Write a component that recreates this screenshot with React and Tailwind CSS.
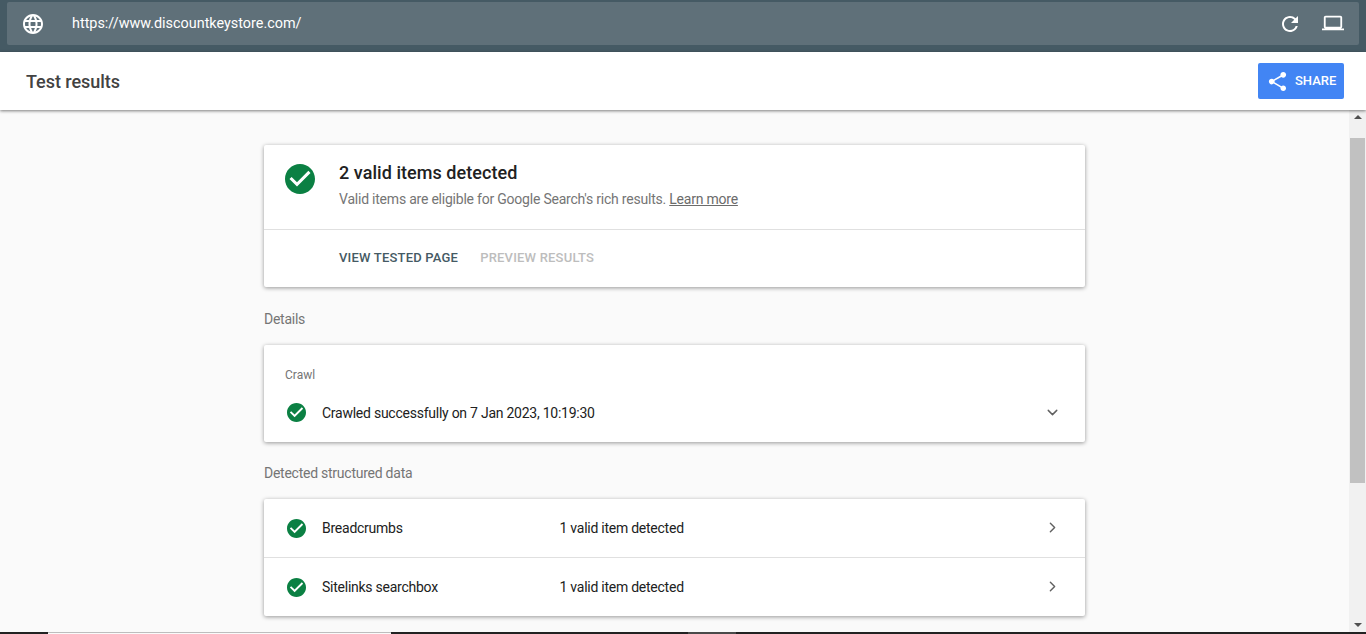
import { ChevronDown, ChevronRight } from "lucide-react";

const font = "font-['Roboto',sans-serif]";

function CheckCircle({ className }) {
  return (
    <svg viewBox="2 2 20 20" className={className}>
      <path
        fill="#0b8043"
        d="M12 2C6.48 2 2 6.48 2 12s4.48 10 10 10 10-4.48 10-10S17.52 2 12 2zm-2 15l-5-5 1.41-1.41L10 14.17l7.59-7.59L19 8l-9 9z"
      />
    </svg>
  );
}

function Row({ name, value, border }) {
  return (
    <div className={`flex items-center pl-[23px] pr-[24px] ${border ? "border-t border-[#e0e0e0] h-[59px]" : "h-[58px]"}`}>
      <CheckCircle className="w-[19px] h-[19px]" />
      <div className="w-[237.5px] ml-[16px] text-[14px] tracking-[-0.25px] text-[#212121]">{name}</div>
      <div className="flex-1 text-[14px] tracking-[-0.25px] text-[#212121]">{value}</div>
      <ChevronRight className="w-[17px] h-[17px] text-[#616161] -mt-[2px]" strokeWidth={2} />
    </div>
  );
}

export default function App() {
  return (
    <div className={`${font} w-[1366px] h-[634px] overflow-hidden flex flex-col bg-[#fafafa] relative`}>
      <div className="h-[52px] bg-[#455a64] px-[7px] pt-[2px] pb-[7px] shrink-0">
        <div className="h-[43px] bg-[#5f7079] rounded-[2px] flex items-center pl-[16px] pr-[15px] text-white">
          <svg viewBox="2 2 20 20" className="w-[20px] h-[20px]" fill="#fff">
            <path d="M11.99 2C6.47 2 2 6.48 2 12s4.47 10 9.99 10C17.52 22 22 17.52 22 12S17.52 2 11.99 2zm6.93 6h-2.95a15.65 15.65 0 0 0-1.38-3.56A8.03 8.03 0 0 1 18.92 8zM12 4.04c.83 1.2 1.48 2.53 1.91 3.96h-3.82c.43-1.43 1.08-2.76 1.91-3.96zM4.26 14C4.1 13.36 4 12.69 4 12s.1-1.36.26-2h3.38c-.08.66-.14 1.32-.14 2s.06 1.34.14 2H4.26zm.82 2h2.95c.32 1.25.78 2.45 1.38 3.56A7.987 7.987 0 0 1 5.08 16zm2.95-8H5.08a7.987 7.987 0 0 1 4.33-3.56A15.65 15.65 0 0 0 8.03 8zM12 19.96c-.83-1.2-1.48-2.53-1.91-3.96h3.82c-.43 1.43-1.08 2.76-1.91 3.96zM14.34 14H9.66c-.09-.66-.16-1.32-.16-2s.07-1.35.16-2h4.68c.09.65.16 1.32.16 2s-.07 1.34-.16 2zm.25 5.56c.6-1.11 1.06-2.31 1.38-3.56h2.95a8.03 8.03 0 0 1-4.33 3.56zM16.36 14c.08-.66.14-1.32.14-2s-.06-1.34-.14-2h3.38c.16.64.26 1.31.26 2s-.1 1.36-.26 2h-3.38z" />
          </svg>
          <div className="ml-[29px] flex-1 text-[14.4px]">https://www.discountkeystore.com/</div>
          <svg viewBox="0 0 24 24" className="w-[24px] h-[24px]" fill="#fff">
            <path d="M17.65 6.35A7.958 7.958 0 0 0 12 4c-4.42 0-7.99 3.58-7.99 8s3.57 8 7.99 8c3.73 0 6.84-2.55 7.73-6h-2.08A5.99 5.99 0 0 1 12 18c-3.31 0-6-2.69-6-6s2.69-6 6-6c1.66 0 3.14.69 4.22 1.78L13 11h7V4l-2.35 2.35z" />
          </svg>
          <svg viewBox="0 0 24 24" className="w-[22px] h-[22px] ml-[20px] -mt-[2px]" fill="#fff">
            <path d="M20 18c1.1 0 1.99-.9 1.99-2L22 6c0-1.1-.9-2-2-2H4c-1.1 0-2 .9-2 2v10c0 1.1.9 2 2 2H0v2h24v-2h-4zM4 6h16v10H4V6z" />
          </svg>
        </div>
      </div>

      <div className="h-[58px] bg-white flex items-center justify-between pl-[26px] pr-[22px] shrink-0 z-10 shadow-[0_1px_3px_rgba(0,0,0,0.5)]">
        <div className="text-[18px] font-medium text-[#424242] tracking-[-0.05px]">Test results</div>
        <button className="w-[86px] h-[36px] bg-[#4285f4] rounded-[2px] flex items-center pl-[8px] text-white text-[13px] font-medium">
          <svg viewBox="0 0 24 24" className="w-[23px] h-[23px] mr-[6px]" fill="#fff">
            <path d="M18 16.08c-.76 0-1.44.3-1.96.77L8.91 12.7c.05-.23.09-.46.09-.7s-.04-.47-.09-.7l7.05-4.11c.54.5 1.25.81 2.04.81 1.66 0 3-1.34 3-3s-1.34-3-3-3-3 1.34-3 3c0 .24.04.47.09.7L8.04 9.81C7.5 9.31 6.79 9 6 9c-1.66 0-3 1.34-3 3s1.34 3 3 3c.79 0 1.5-.31 2.04-.81l7.12 4.16c-.05.21-.08.43-.08.65 0 1.61 1.31 2.92 2.92 2.92s2.92-1.31 2.92-2.92-1.31-2.92-2.92-2.92z" />
          </svg>
          SHARE
        </button>
      </div>

      <div className="flex-1 flex min-h-0">
        <div className="flex-1 pl-[264px] pt-[35px]">
          <div className="w-[821px] bg-white rounded-[2px] shadow-[0_1px_4px_rgba(0,0,0,0.4)]">
            <div className="h-[85px] flex border-b border-[#e0e0e0] pl-[21px]">
              <CheckCircle className="w-[30px] h-[30px] mt-[19px]" />
              <div className="ml-[24px] pt-[15px]">
                <div className="text-[18px] leading-[26px] font-medium tracking-[0.05px] text-[#212121]">2 valid items detected</div>
                <div className="text-[14px] leading-[20px] tracking-[-0.22px] mt-[3px] text-[#757575]">
                  Valid items are eligible for Google Search's rich results.{" "}
                  <span className="underline text-[#6b6b6b]">Learn more</span>
                </div>
              </div>
            </div>
            <div className="h-[57px] flex items-center pl-[75px] pb-[2px] text-[13px] font-medium tracking-[0.2px]">
              <span className="text-[#455a64]">VIEW TESTED PAGE</span>
              <span className="ml-[22px] text-[#bdbdbd]">PREVIEW RESULTS</span>
            </div>
          </div>

          <div className="text-[14px] leading-[20px] tracking-[-0.25px] text-[#757575] mt-[22px]">Details</div>

          <div className="w-[821px] h-[97px] mt-[16px] bg-white rounded-[2px] shadow-[0_1px_4px_rgba(0,0,0,0.4)] pl-[21px] pr-[24px] pt-[22px]">
            <div className="text-[12px] leading-[16px] text-[#757575]">Crawl</div>
            <div className="flex items-center mt-[17px] h-[24px] pl-[2px]">
              <CheckCircle className="w-[19px] h-[19px]" />
              <div className="flex-1 ml-[16px] pt-[2px] text-[14px] tracking-[-0.25px] text-[#212121]">Crawled successfully on 7 Jan 2023, 10:19:30</div>
              <ChevronDown className="w-[17px] h-[17px] text-[#616161]" strokeWidth={2} />
            </div>
          </div>

          <div className="text-[14px] leading-[20px] tracking-[-0.25px] text-[#757575] mt-[21px]">Detected structured data</div>

          <div className="w-[821px] mt-[16px] bg-white rounded-[2px] shadow-[0_1px_4px_rgba(0,0,0,0.4)]">
            <Row name="Breadcrumbs" value="1 valid item detected" />
            <Row name="Sitelinks searchbox" value="1 valid item detected" border />
          </div>
        </div>

        <div className="w-[17px] bg-[#f1f1f1] flex flex-col items-center mb-[2px] shrink-0">
          <div className="h-[14px] flex items-center justify-center">
            <div className="w-0 h-0 border-x-[4px] border-x-transparent border-b-[4px] border-b-[#505050]" />
          </div>
          <div className="w-[15px] h-[345px] mt-[14px] bg-[#c1c1c1]" />
          <div className="flex-1" />
          <div className="h-[14px] flex items-center justify-center">
            <div className="w-0 h-0 border-x-[4px] border-x-transparent border-t-[4px] border-t-[#505050]" />
          </div>
        </div>
      </div>

      <div className="absolute bottom-0 left-0 w-full h-[2px] bg-[#222] flex">
        <div className="ml-[48px] w-[343px] bg-[#fafafa] border-t border-[#bdbdbd]" />
        <div className="ml-[297px] w-[48px] bg-[#4a4a4a]" />
      </div>
    </div>
  );
}
